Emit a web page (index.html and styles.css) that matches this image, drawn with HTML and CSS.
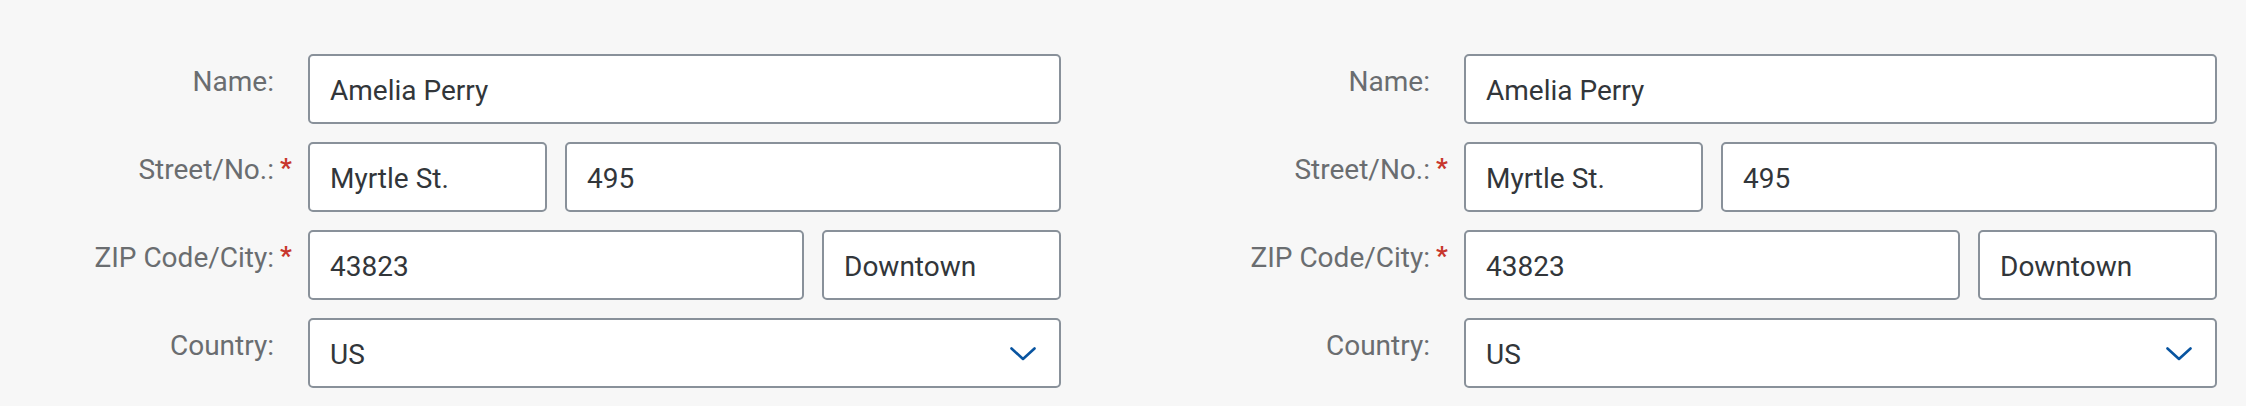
FILE: index.html
```html
<!DOCTYPE html>
<html lang="en">
<head>
<meta charset="utf-8">
<title>Address Forms</title>
<link rel="stylesheet" href="styles.css">
</head>
<body>
<div class="page">
  <form class="form">
    <div class="label"><span class="text">Name:</span><span class="req"></span></div>
    <div class="fields"><div class="input">Amelia Perry</div></div>

    <div class="label"><span class="text">Street/No.:</span><span class="req">*</span></div>
    <div class="fields">
      <div class="input narrow">Myrtle St.</div>
      <div class="input grow">495</div>
    </div>

    <div class="label"><span class="text">ZIP Code/City:</span><span class="req">*</span></div>
    <div class="fields">
      <div class="input grow">43823</div>
      <div class="input narrow">Downtown</div>
    </div>

    <div class="label"><span class="text">Country:</span><span class="req"></span></div>
    <div class="fields">
      <div class="input select"><span>US</span>
        <svg class="chevron" width="26" height="14" viewBox="0 0 26 14"><path d="M1.5 1.5 L13 12 L24.5 1.5" fill="none" stroke="#0854a0" stroke-width="2.6" stroke-linecap="round" stroke-linejoin="round"/></svg>
      </div>
    </div>
  </form>

  <form class="form second">
    <div class="label"><span class="text">Name:</span><span class="req"></span></div>
    <div class="fields"><div class="input">Amelia Perry</div></div>

    <div class="label"><span class="text">Street/No.:</span><span class="req">*</span></div>
    <div class="fields">
      <div class="input narrow">Myrtle St.</div>
      <div class="input grow">495</div>
    </div>

    <div class="label"><span class="text">ZIP Code/City:</span><span class="req">*</span></div>
    <div class="fields">
      <div class="input grow">43823</div>
      <div class="input narrow">Downtown</div>
    </div>

    <div class="label"><span class="text">Country:</span><span class="req"></span></div>
    <div class="fields">
      <div class="input select"><span>US</span>
        <svg class="chevron" width="26" height="14" viewBox="0 0 26 14"><path d="M1.5 1.5 L13 12 L24.5 1.5" fill="none" stroke="#0854a0" stroke-width="2.6" stroke-linecap="round" stroke-linejoin="round"/></svg>
      </div>
    </div>
  </form>
</div>
</body>
</html>
```

FILE: styles.css
```css
html, body {
  margin: 0;
  padding: 0;
  background: #f7f7f7;
}
body {
  font-family: Roboto, "Liberation Sans", sans-serif;
  font-size: 28px;
}
.page {
  display: flex;
  padding-top: 54px;
  gap: 95px;
}
.form {
  display: grid;
  grid-template-columns: 292px 753px;
  column-gap: 16px;
  row-gap: 18px;
}
.label {
  display: flex;
  justify-content: flex-end;
  align-items: flex-start;
  padding-top: 11px;
  color: #6a6d70;
  line-height: normal;
  white-space: nowrap;
}
.req {
  width: 18px;
  padding-left: 6px;
  box-sizing: border-box;
  color: #c8372d;
  font-weight: 700;
  font-size: 26px;
}
.fields {
  display: flex;
  gap: 18px;
}
.input {
  box-sizing: border-box;
  height: 70px;
  flex: 1;
  background: #fff;
  border: 2px solid #89919a;
  border-radius: 5px;
  padding: 2px 20px 0 20px;
  display: flex;
  align-items: center;
  color: #32363a;
  white-space: nowrap;
}
.input.narrow {
  flex: 0 0 239px;
}
.input.grow {
  flex: 1;
}
.input.select {
  justify-content: space-between;
  padding-right: 23px;
}
.chevron {
  display: block;
  margin-top: 0;
}
```
